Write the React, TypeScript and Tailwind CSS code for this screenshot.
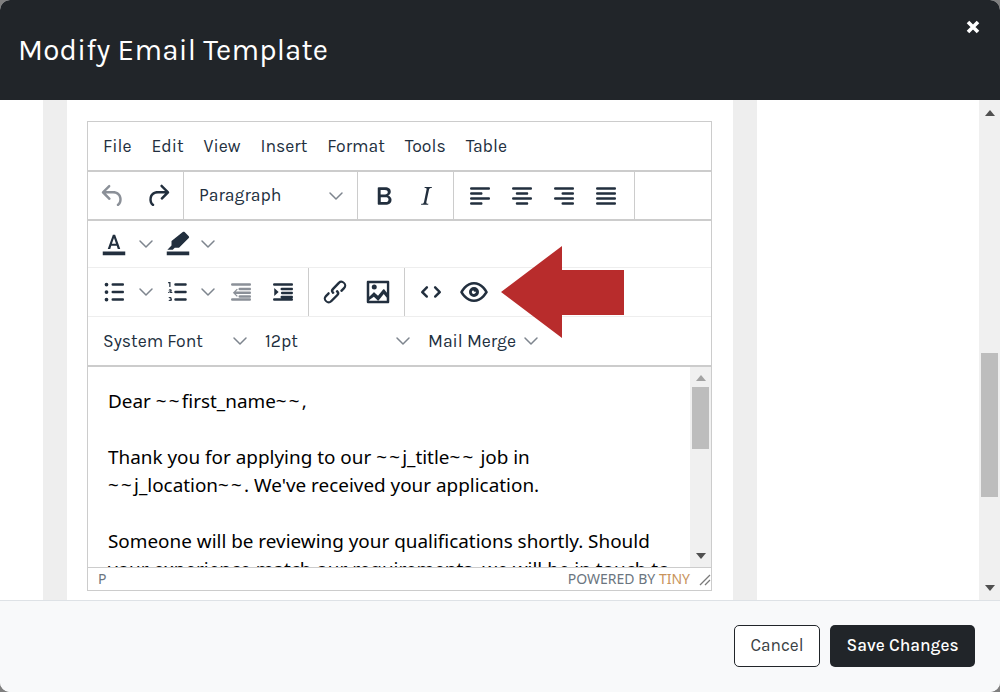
import React from 'react'
import { ChevronDown } from 'lucide-react'

const UI = "font-['Karla','Inter','Noto_Sans',sans-serif]"

const Chev = ({ className = '' }: { className?: string }) => (
  <ChevronDown size={24} strokeWidth={1.5} className={`text-[#7e858e] shrink-0 ${className}`} />
)

const Icon = ({ d, fill = '#222f3e', className = '' }: { d: string; fill?: string; className?: string }) => (
  <svg width="30" height="30" viewBox="0 0 24 24" className={`shrink-0 ${className}`}><path d={d} fill={fill} fillRule="evenodd" /></svg>
)

// tilde is wider in the editor font than in Noto Sans
const T = () => <span className="tracking-[2.2px]">~~</span>

// tinymce oxide icons
const UNDO = 'M6.4 8H12c3.7 0 6.2 2 6.8 5.1.6 2.7-.4 5.6-2.3 6.8a1 1 0 0 1-1-1.8c1.1-.6 1.8-2.7 1.4-4.6-.5-2.1-2.1-3.5-4.9-3.5H6.4l3.3 3.3a1 1 0 1 1-1.4 1.4l-5-5a1 1 0 0 1 0-1.4l5-5a1 1 0 0 1 1.4 1.4L6.4 8Z'
const REDO = 'M17.6 10H12c-2.8 0-4.4 1.4-4.9 3.5-.4 2 .3 4 1.4 4.6a1 1 0 1 1-1 1.8c-2-1.2-2.9-4.1-2.3-6.8.6-3 3-5.1 6.8-5.1h5.6l-3.3-3.3a1 1 0 1 1 1.4-1.4l5 5a1 1 0 0 1 0 1.4l-5 5a1 1 0 0 1-1.4-1.4l3.3-3.3Z'
const BOLD = 'M7.8 19c-.3 0-.5 0-.6-.2l-.2-.5V5.7c0-.2 0-.4.2-.5l.6-.2h5c1.5 0 2.7.3 3.5 1 .7.6 1.1 1.4 1.1 2.5a3 3 0 0 1-.6 1.9c-.4.6-1 1-1.6 1.2.4.1.9.3 1.3.6s.8.7 1 1.2c.4.4.5 1 .5 1.6 0 1.3-.4 2.3-1.3 3-.8.7-2.1 1-3.8 1H7.8Zm5-8.3c.6 0 1.2-.1 1.6-.5.4-.3.6-.7.6-1.3 0-1.1-.8-1.7-2.3-1.7H9.3v3.5h3.4Zm.5 6c.7 0 1.3-.1 1.7-.4.4-.4.6-.9.6-1.5s-.2-1-.7-1.4c-.4-.3-1-.4-2-.4H9.4v3.8h4Z'
const ITALIC = 'm16.7 4.7-.1.9h-.3c-.6 0-1 0-1.4.3-.3.3-.4.6-.5 1.1l-2.1 9.8v.6c0 .5.4.8 1.4.8h.2l-.2.8H8l.2-.8h.2c1.1 0 1.8-.5 2-1.5l2-9.8.1-.5c0-.6-.4-.8-1.4-.8h-.3l.2-.9h5.8Z'
const ALIGN_L = 'M5 5h14c.6 0 1 .4 1 1s-.4 1-1 1H5a1 1 0 1 1 0-2Zm0 4h8c.6 0 1 .4 1 1s-.4 1-1 1H5a1 1 0 1 1 0-2Zm0 8h8c.6 0 1 .4 1 1s-.4 1-1 1H5a1 1 0 0 1 0-2Zm0-4h14c.6 0 1 .4 1 1s-.4 1-1 1H5a1 1 0 0 1 0-2Z'
const ALIGN_C = 'M5 5h14c.6 0 1 .4 1 1s-.4 1-1 1H5a1 1 0 1 1 0-2Zm3 4h8c.6 0 1 .4 1 1s-.4 1-1 1H8a1 1 0 1 1 0-2Zm0 8h8c.6 0 1 .4 1 1s-.4 1-1 1H8a1 1 0 0 1 0-2Zm-3-4h14c.6 0 1 .4 1 1s-.4 1-1 1H5a1 1 0 0 1 0-2Z'
const ALIGN_R = 'M5 5h14c.6 0 1 .4 1 1s-.4 1-1 1H5a1 1 0 1 1 0-2Zm6 4h8c.6 0 1 .4 1 1s-.4 1-1 1h-8a1 1 0 0 1 0-2Zm0 8h8c.6 0 1 .4 1 1s-.4 1-1 1h-8a1 1 0 0 1 0-2Zm-6-4h14c.6 0 1 .4 1 1s-.4 1-1 1H5a1 1 0 0 1 0-2Z'
const ALIGN_J = 'M5 5h14c.6 0 1 .4 1 1s-.4 1-1 1H5a1 1 0 1 1 0-2Zm0 4h14c.6 0 1 .4 1 1s-.4 1-1 1H5a1 1 0 1 1 0-2Zm0 4h14c.6 0 1 .4 1 1s-.4 1-1 1H5a1 1 0 0 1 0-2Zm0 4h14c.6 0 1 .4 1 1s-.4 1-1 1H5a1 1 0 0 1 0-2Z'
const TEXT_COLOR = 'M3 18h18v3H3v-3Zm8.1-13.5h1.8L17 16h-2l-.8-2.6H9.8L9 16H7l4.1-11.5Zm.9 2.6-1.7 4.6h3.3L12 7.1Z'
const HIGHLIGHT = 'M3 18h18v3H3v-3Zm14.3-15.6 3.3 3.3c.4.4.4 1 0 1.4l-7.8 7.8H9.4l-1.6 1.6H3.5l3.3-3.3v-3.7l9-7.1c.5-.4 1-.4 1.5 0Z'
const BULLIST = 'M11 5h8c.6 0 1 .4 1 1s-.4 1-1 1h-8a1 1 0 0 1 0-2Zm0 6h8c.6 0 1 .4 1 1s-.4 1-1 1h-8a1 1 0 0 1 0-2Zm0 6h8c.6 0 1 .4 1 1s-.4 1-1 1h-8a1 1 0 0 1 0-2ZM4.5 6a1.5 1.5 0 1 1 3 0 1.5 1.5 0 0 1-3 0Zm0 6a1.5 1.5 0 1 1 3 0 1.5 1.5 0 0 1-3 0Zm0 6a1.5 1.5 0 1 1 3 0 1.5 1.5 0 0 1-3 0Z'
const NUMLIST = 'M10 17h8c.6 0 1 .4 1 1s-.4 1-1 1h-8a1 1 0 0 1 0-2Zm0-6h8c.6 0 1 .4 1 1s-.4 1-1 1h-8a1 1 0 0 1 0-2Zm0-6h8c.6 0 1 .4 1 1s-.4 1-1 1h-8a1 1 0 1 1 0-2ZM6 4v3.5c0 .3-.2.5-.5.5a.5.5 0 0 1-.5-.5V5h-.5a.5.5 0 0 1 0-1H6Zm-1 8.8.2-.2 1.2-1c.3-.2.6-.3.6-.9 0-.7-.5-1-1.1-1-.7 0-1.4.4-1.4 1h1l.4-.2c.1 0 .1.2 0 .3l-1.7 1.4c-.2.2-.2.6.1.6H7a.5.5 0 0 0 0-1H5Zm1.6 5.2.4-.8c0-.8-.6-1.2-1.4-1.2-.6 0-1.1.3-1.2.8h1l.3-.1c.2 0 .3.1.3.3 0 .1-.1.2-.3.2h-.4v.7h.5c.2 0 .3.1.3.3 0 .2-.1.3-.3.3l-.4-.1h-1c.1.6.6.9 1.3.9.9 0 1.5-.4 1.5-1.2 0-.4-.2-.7-.4-.9Z'
const OUTDENT = 'M7.8 11.5H19c.6 0 1 .4 1 1s-.4 1-1 1H7.8l1.6 1.6-.7.7-3.2-3.3 3.2-3.2.7.7-1.6 1.5ZM5 5h14c.6 0 1 .4 1 1s-.4 1-1 1H5a1 1 0 1 1 0-2Zm6 3.5h8c.6 0 1 .4 1 1s-.4 1-1 1h-8a1 1 0 0 1 0-2Zm0 6h8c.6 0 1 .4 1 1s-.4 1-1 1h-8a1 1 0 0 1 0-2ZM5 17h14c.6 0 1 .4 1 1s-.4 1-1 1H5a1 1 0 0 1 0-2Z'
const INDENT = 'M8.5 12 5 8.8v6.4L8.5 12ZM5 5h14c.6 0 1 .4 1 1s-.4 1-1 1H5a1 1 0 1 1 0-2Zm6 3.5h8c.6 0 1 .4 1 1s-.4 1-1 1h-8a1 1 0 0 1 0-2Zm0 3.3h8c.6 0 1 .4 1 .9s-.4 1-1 1h-8a1 1 0 0 1 0-1.9Zm0 3.2h8c.6 0 1 .4 1 1s-.4 1-1 1h-8a1 1 0 0 1 0-2ZM5 17h14c.6 0 1 .4 1 1s-.4 1-1 1H5a1 1 0 0 1 0-2Z'
const LINK = 'M6.2 12.3a1 1 0 0 1 1.4 1.4l-2 2a2 2 0 1 0 2.8 2.8l4.8-4.8a1 1 0 0 0 0-1.4 1 1 0 1 1 1.4-1.3 2.9 2.9 0 0 1 0 4L9.6 20a3.9 3.9 0 0 1-5.5-5.5l2-2Zm11.6-.6a1 1 0 0 1-1.4-1.4l2-2a2 2 0 1 0-2.8-2.8L11 10.3a1 1 0 0 0 0 1.4A1 1 0 1 1 9.6 13a2.9 2.9 0 0 1 0-4L14.4 4a3.9 3.9 0 0 1 5.5 5.5l-2.1 2.2Z'
const IMAGE = 'm5 15.7 3.3-3.2c.3-.3.7-.3 1 0L12 15l4.1-5c.3-.4.8-.4 1 0l2 2.6V5H5v10.7ZM5 18.3V19h14v-2.5l-2.4-3-4 5c-.3.3-.8.4-1 0l-2.9-2.7L5 18.3ZM3 4c0-.6.4-1 1-1h16c.6 0 1 .4 1 1v16c0 .6-.4 1-1 1H4a1 1 0 0 1-1-1V4Zm6 6a2 2 0 1 1 0-4 2 2 0 0 1 0 4Z'
const CODE = 'M9.4 7.6a1 1 0 0 1 0 1.4L6.4 12l3 3a1 1 0 0 1-1.4 1.4l-3.7-3.7a1 1 0 0 1 0-1.4L8 7.6a1 1 0 0 1 1.4 0Zm5.2 0a1 1 0 0 1 1.4 0l3.7 3.7a1 1 0 0 1 0 1.4L16 16.4a1 1 0 0 1-1.4-1.4l3-3-3-3a1 1 0 0 1 0-1.4Z'
const EYE = 'M3.5 12.5c.5.8 1.1 1.6 1.8 2.3 2 2 4.2 3.2 6.7 3.2s4.7-1.2 6.7-3.2a16.2 16.2 0 0 0 2.1-2.8 15.7 15.7 0 0 0-2.1-2.8c-2-2-4.2-3.2-6.7-3.2S7.3 7.2 5.3 9.2A16.2 16.2 0 0 0 3.2 12l.3.5Zm-2.4-1 .7-1.1c.5-.8 1.2-1.7 2-2.6C6.2 5.4 8.9 4 12 4c3.1 0 5.8 1.4 8.2 3.8a18.2 18.2 0 0 1 2.7 3.7c.2.3.2.7 0 1l-.7 1.1c-.5.8-1.2 1.7-2 2.6-2.4 2.4-5.1 3.8-8.2 3.8-3.1 0-5.8-1.4-8.2-3.8a18.2 18.2 0 0 1-2.7-3.7 1 1 0 0 1 0-1ZM12 16a4 4 0 1 1 0-8 4 4 0 0 1 0 8Zm0-2.5a1.5 1.5 0 0 0 1.4-2 1.2 1.2 0 0 1-1.9-1 1.5 1.5 0 0 0 .5 3Z'

const Btn = ({ d, fill, className = '' }: { d: string; fill?: string; className?: string }) => (
  <div className={`w-[34px] h-[34px] shrink-0 flex items-center justify-center ${className}`}><Icon d={d} fill={fill} /></div>
)

const Triangle = ({ up = false, fill = '#505050', className = '' }: { up?: boolean; fill?: string; className?: string }) => (
  <svg width="10" height="6" viewBox="0 0 10 6" className={className}><path d={up ? 'M5 0 10 6H0Z' : 'M0 0H10L5 6Z'} fill={fill} /></svg>
)

export default function App() {
  return (
    <div className={`w-[1000px] h-[692px] bg-[#7f7f7f] overflow-hidden ${UI}`}>
      <div className="w-full h-full rounded-[10px] overflow-hidden bg-white flex flex-col">
        {/* header */}
        <div className="h-[100px] shrink-0 bg-[#212529] flex items-center pl-[18px] relative">
          <h1 className="text-[29.5px] text-white font-normal tracking-[0.2px]">Modify Email Template</h1>
          <svg width="14" height="14" viewBox="0 0 14 14" className="absolute right-[20px] top-[20px]"><path d="M2 2l10 10M12 2 2 12" stroke="#fff" strokeWidth="3.6" /></svg>
        </div>

        {/* body */}
        <div className="h-[500px] shrink-0 flex overflow-hidden">
          <div className="flex-1 pl-[43px]">
            <div className="w-[714px] h-full bg-[#eeeeee] px-[24px]">
              <div className="bg-white h-full pl-[20px] pr-[21px] pt-[21px]">
                {/* editor */}
                <div className="h-[470px] border border-[#cccccc] flex flex-col bg-white">
                  <div className="h-[50px] shrink-0 flex items-center gap-[20px] pl-[15px] text-[#222f3e] text-[17.6px] border-b-2 border-[#cccccc]">
                    {['File', 'Edit', 'View', 'Insert', 'Format', 'Tools', 'Table'].map(m => <span key={m}>{m}</span>)}
                  </div>
                  <div className="h-[49px] shrink-0 flex items-center border-b-2 border-[#cccccc]">
                    <div className="w-[96px] h-full flex items-center pl-[8px] gap-[11px] border-r border-[#cccccc]">
                      <Btn d={UNDO} fill="#8b9098" />
                      <Btn d={REDO} />
                    </div>
                    <div className="w-[174px] h-full flex items-center justify-between pl-[15px] pr-[9px] border-r border-[#cccccc]">
                      <span className="text-[17.6px] text-[#222f3e]">Paragraph</span>
                      <Chev />
                    </div>
                    <div className="w-[96px] h-full flex items-center gap-[8px] pl-[9px] border-r border-[#cccccc]">
                      <Btn d={BOLD} />
                      <Btn d={ITALIC} />
                    </div>
                    <div className="w-[181px] h-full flex items-center gap-[8px] pl-[9px] border-r border-[#cccccc]">
                      <Btn d={ALIGN_L} />
                      <Btn d={ALIGN_C} />
                      <Btn d={ALIGN_R} />
                      <Btn d={ALIGN_J} />
                    </div>
                  </div>
                  <div className="h-[47px] shrink-0 flex items-center pl-[9px] border-b border-[#eeeeee]">
                    <Btn d={TEXT_COLOR} />
                    <Chev className="ml-[3px]" />
                    <Btn d={HIGHLIGHT} className="ml-[3px]" />
                    <Chev className="ml-[1px]" />
                  </div>
                  <div className="h-[49px] shrink-0 flex items-center border-b border-[#eeeeee]">
                    <div className="w-[221px] h-full flex items-center pl-[9px] border-r border-[#cccccc]">
                      <Btn d={BULLIST} />
                      <Chev className="ml-[3px]" />
                      <Btn d={NUMLIST} className="ml-[3px]" />
                      <Chev className="ml-[1px]" />
                      <Btn d={OUTDENT} fill="#8b9098" className="ml-[4px]" />
                      <Btn d={INDENT} className="ml-[8px]" />
                    </div>
                    <div className="w-[96px] h-full flex items-center gap-[9px] pl-[9px] border-r border-[#cccccc]">
                      <Btn d={LINK} />
                      <Btn d={IMAGE} />
                    </div>
                    <div className="flex items-center gap-[9px] pl-[9px] relative">
                      <Btn d={CODE} />
                      <Btn d={EYE} />
                      {/* annotation arrow */}
                      <svg width="124" height="93" viewBox="0 0 124 93" className="absolute left-[96px] top-[-29px]">
                        <path d="M0 46 61 0V24H123V69H61V92Z" fill="#b82c2c" />
                      </svg>
                    </div>
                  </div>
                  <div className="h-[50px] shrink-0 flex items-center text-[17.6px] text-[#222f3e] border-b-2 border-[#cccccc]">
                    <div className="w-[164px] flex items-center justify-between pl-[15px]"><span>System Font</span><Chev /></div>
                    <div className="w-[163px] flex items-center justify-between pl-[13px]"><span>12pt</span><Chev /></div>
                    <div className="flex items-center pl-[13px] gap-[3px]"><span>Mail Merge</span><Chev /></div>
                  </div>

                  <div className="flex-1 min-h-0 flex">
                    <div className="flex-1 overflow-hidden pl-[20px] pt-[20px] font-['Noto_Sans','Open_Sans',sans-serif] text-[18.9px] leading-[28px] text-black">
                      <p>Dear <T />first_name<T />,</p>
                      <p className="mt-[28px]">Thank you for applying to our <T />j_title<T /> job in<br /><T />j_location<T />. We've received your application.</p>
                      <p className="mt-[28px]">Someone will be reviewing your qualifications shortly. Should<br />your experience match our requirements, we will be in touch to</p>
                    </div>
                    <div className="w-[21px] bg-[#f0f0f0] flex flex-col items-center shrink-0">
                      <Triangle up fill="#a3a3a3" className="mt-[8px]" />
                      <div className="w-[17px] h-[62px] bg-[#bdbdbd] mt-[6px]" />
                      <Triangle className="mt-auto mb-[8px]" />
                    </div>
                  </div>
                  <div className="h-[23px] shrink-0 flex items-center justify-between border-t border-[#cccccc] pl-[10px] pb-[2px] text-[14px] text-[#6b7580] font-['Noto_Sans',sans-serif] bg-white">
                    <span>P</span>
                    <div className="flex items-center">
                      <span>POWERED BY <span className="text-[#c8935a]">TINY</span></span>
                      <svg width="21" height="12" viewBox="0 0 21 12" className="translate-y-[2px]"><path d="M10 11 20 1M15 11 20 6" stroke="#7a7a7a" strokeWidth="1.3" /></svg>
                    </div>
                  </div>
                </div>
              </div>
            </div>
          </div>
          <div className="w-[21px] shrink-0 bg-[#f0f0f0] flex flex-col items-center">
            <Triangle up className="mt-[10px]" />
            <div className="w-[17px] h-[144px] bg-[#bdbdbd] mt-[237px]" />
            <Triangle className="mt-auto mb-[9px]" />
          </div>
        </div>

        {/* footer */}
        <div className="flex-1 bg-[#f8f9fa] border-t border-[#dee2e6] flex items-center justify-end gap-[10px] pr-[25px] pb-[1px]">
          <button className="w-[86px] h-[42px] bg-white border border-[#212529] rounded-[5px] text-[17.3px] text-[#3a3f44]">Cancel</button>
          <button className="w-[145px] h-[42px] bg-[#212529] rounded-[5px] text-[17.3px] text-white font-medium">Save Changes</button>
        </div>
      </div>
    </div>
  )
}
